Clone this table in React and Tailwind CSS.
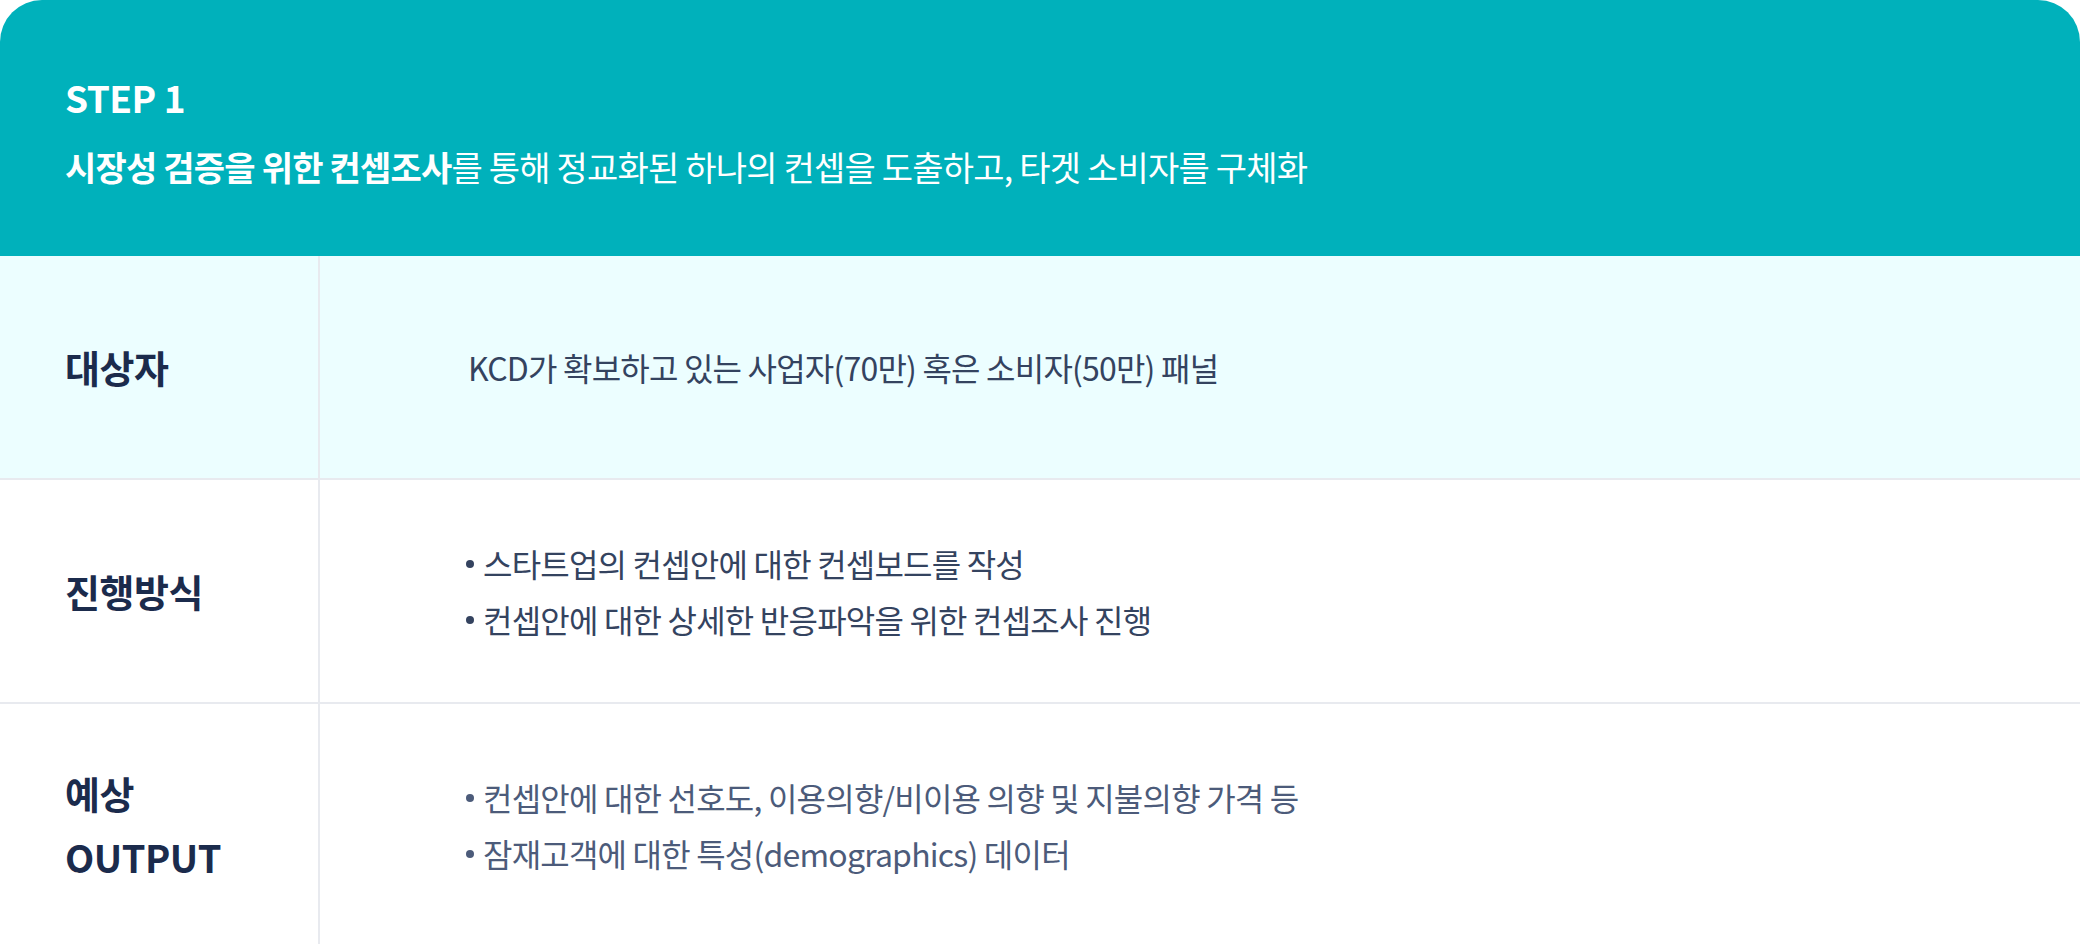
import React from 'react';

const rows = [
  {
    label: ['대상자'],
    items: ['KCD가 확보하고 있는 사업자(70만) 혹은 소비자(50만) 패널'],
    bullet: false,
    tint: true,
    tone: 'text-[#34435f]',
  },
  {
    label: ['진행방식'],
    items: ['스타트업의 컨셉안에 대한 컨셉보드를 작성', '컨셉안에 대한 상세한 반응파악을 위한 컨셉조사 진행'],
    bullet: true,
    tone: 'text-[#34435f]',
  },
  {
    label: ['예상', 'OUTPUT'],
    items: ['컨셉안에 대한 선호도, 이용의향/비이용 의향 및 지불의향 가격 등', '잠재고객에 대한 특성(demographics) 데이터'],
    bullet: true,
    tone: 'text-[#4c5b7a]',
  },
];

const Row = ({ row, last }) => (
  <div
    className={`flex ${row.tint ? 'bg-[#ecfeff]' : 'bg-white'} ${
      last ? 'h-[241px]' : 'h-[224px] border-b-2 border-[#e8eaef]'
    }`}
  >
    <div className="w-[320px] shrink-0 border-r-2 border-[#e8eaef] flex flex-col justify-center pl-[65px] gap-[14px]">
      {row.label.map((l) => (
        <div key={l} className="text-[38px] leading-[50px] font-bold text-[#1b2b4c] tracking-[-0.5px]">
          {l}
        </div>
      ))}
    </div>
    <div className={`flex-1 flex flex-col justify-center pl-[146px] gap-[12px] ${row.tone}`}>
      {row.items.map((t) => (
        <div key={t} className="text-[32px] leading-[44px] tracking-[-0.8px] whitespace-nowrap flex items-center">
          {row.bullet && <span className="w-[8px] h-[8px] rounded-full bg-current mr-[9px] mt-[2px]" />}
          <span className={row.bullet ? '' : 'ml-[2px]'}>{t}</span>
        </div>
      ))}
    </div>
  </div>
);

export default function App() {
  return (
    <div className="w-[2080px] h-[944px] bg-white overflow-hidden font-['Noto_Sans_CJK_KR','Noto_Sans',sans-serif]">
      <div className="h-[256px] bg-[#00b1bb] rounded-t-[42px] pl-[65px] pt-[72px] text-white">
        <div className="text-[37px] leading-[50px] font-bold tracking-[-0.5px]">STEP 1</div>
        <div className="mt-[22px] text-[34px] leading-[46px] tracking-[-0.8px]">
          <span className="font-bold">시장성 검증을 위한 컨셉조사</span>를 통해 정교화된 하나의 컨셉을 도출하고, 타겟 소비자를 구체화
        </div>
      </div>
      {rows.map((r, i) => (
        <Row key={i} row={r} last={i === rows.length - 1} />
      ))}
    </div>
  );
}
